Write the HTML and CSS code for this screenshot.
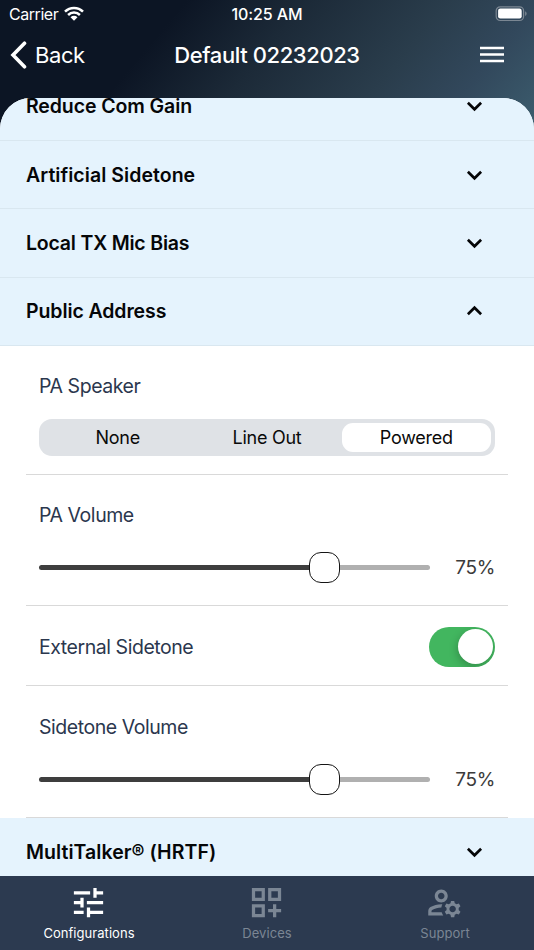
FILE: index.html
```html
<!DOCTYPE html>
<html lang="en">
<head>
<meta charset="utf-8">
<title>Default 02232023</title>
<link rel="stylesheet" href="styles.css">
</head>
<body>
<div class="app">
  <div class="status">
    <div class="carrier"><span class="carrier-name">Carrier</span>
      <svg class="wifi" viewBox="0 0 20 15"><path d="M1 5.6a12.8 12.8 0 0 1 18 0M4.1 9a8.4 8.4 0 0 1 11.8 0" fill="none" stroke="#fff" stroke-width="2.5"/><path d="M6.5 11.3a5 5 0 0 1 7 0L10 14.8z" fill="#fff"/></svg>
    </div>
    <div class="clock">10:25 AM</div>
    <svg class="battery" viewBox="0 0 32 16"><rect x="1.2" y=".8" width="27.4" height="13.7" rx="4" fill="none" stroke="#7b8793" stroke-width="1.2"/><rect x="3.1" y="2.6" width="23.6" height="9.9" rx="2.2" fill="#fff"/><path d="M30.1 5.2c2 .8 2 4 0 4.800z" fill="#7b8793"/></svg>
  </div>
  <header class="nav">
    <div class="back"><svg class="back-icon" viewBox="0 0 18 28"><path d="M15.500 2.200 4 14l11.500 11.800" fill="none" stroke="#fff" stroke-width="3.600" stroke-linecap="round" stroke-linejoin="miter"/></svg><span>Back</span></div>
    <h1 class="title">Default 02232023</h1>
    <svg class="menu" viewBox="0 0 24 18"><path d="M0 2h24M0 8.500h24M0 15h24"/></svg>
  </header>
  <main class="sheet">
    <div class="list">
      <div class="row"><span>Reduce Com Gain</span><svg class="chev" viewBox="0 0 18 12"><path d="m2 2.500 7 7 7-7"/></svg></div>
      <div class="row wide low"><span>Artificial Sidetone</span><svg class="chev" viewBox="0 0 18 12"><path d="m2 2.500 7 7 7-7"/></svg></div>
      <div class="row tight"><span>Local TX Mic Bias</span><svg class="chev" viewBox="0 0 18 12"><path d="m2 2.500 7 7 7-7"/></svg></div>
      <div class="row"><span>Public Address</span><svg class="chev" viewBox="0 0 18 12"><path d="m2 9.500 7-7 7 7"/></svg></div>
      <section class="item speaker">
        <div class="label">PA Speaker</div>
        <div class="segments"><span class="seg">None</span><span class="seg">Line Out</span><span class="seg on">Powered</span></div>
      </section>
      <section class="item volume">
        <div class="label">PA Volume</div>
        <div class="slide"><div class="track"><div class="fill"></div><div class="knob"></div><div class="rest"></div></div><span class="pct">75%</span></div>
      </section>
      <section class="item external">
        <div class="label">External Sidetone</div>
        <div class="switch"><div class="dot"></div></div>
      </section>
      <section class="item volume last">
        <div class="label">Sidetone Volume</div>
        <div class="slide"><div class="track"><div class="fill"></div><div class="knob"></div><div class="rest"></div></div><span class="pct">75%</span></div>
      </section>
      <div class="row wide low"><span>MultiTalker® (HRTF)</span><svg class="chev" viewBox="0 0 18 12"><path d="m2 2.500 7 7 7-7"/></svg></div>
    </div>
  </main>
  <nav class="tabs">
    <div class="tab active"><svg viewBox="0 0 24 24"><path d="M3 17v2h6v-2H3zM3 5v2h10V5H3zm10 16v-2h8v-2h-8v-2h-2v6h2zM7 9v2H3v2h4v2h2V9H7zm14 4v-2H11v2h10zm-6-4h2V7h4V5h-4V3h-2v6z"/></svg><span>Configurations</span></div>
    <div class="tab"><svg viewBox="0 0 24 24"><path d="M3 11h8V3H3v8zm2-6h4v4H5V5zM13 3v8h8V3h-8zm6 6h-4V5h4v4zM3 21h8v-8H3v8zm2-6h4v4H5v-4zM18 13h-2v3h-3v2h3v3h2v-3h3v-2h-3z"/></svg><span>Devices</span></div>
    <div class="tab"><svg viewBox="0 0 24 24"><path d="M4 18v-.65c0-.34.16-.66.41-.81C6.100 15.530 8.030 15 10 15c.03 0 .05 0 .08.01.1-.7.3-1.370.59-1.980C10.450 13.010 10.230 13 10 13c-2.420 0-4.680.67-6.610 1.820C2.510 15.340 2 16.320 2 17.350V20h9.260c-.42-.6-.75-1.280-.97-2H4zM10 12c2.210 0 4-1.790 4-4s-1.790-4-4-4-4 1.790-4 4 1.790 4 4 4zm0-6c1.100 0 2 .9 2 2s-.9 2-2 2-2-.9-2-2 .9-2 2-2zM20.750 16c0-.22-.03-.42-.06-.63l1.140-1.010-1-1.730-1.450.49c-.32-.27-.68-.48-1.080-.63L18 11h-2l-.3 1.490c-.4.15-.76.36-1.080.63l-1.450-.49-1 1.730 1.140 1.010c-.03.21-.06.41-.06.63s.03.42.06.63l-1.140 1.010 1 1.730 1.450-.49c.32.27.68.48 1.080.63L16 21h2l.3-1.490c.4-.15.76-.36 1.080-.63l1.450.49 1-1.730-1.140-1.010c.03-.21.06-.41.06-.63zM17 18c-1.100 0-2-.9-2-2s.9-2 2-2 2 .9 2 2-.9 2-2 2z"/></svg><span>Support</span></div>
  </nav>
</div>
</body>
</html>
```
FILE: styles.css
```css
* { box-sizing: border-box; }
body { margin: 0; font-family: Inter, "Liberation Sans", sans-serif; }
.app {
  width: 534px; height: 950px; overflow: hidden;
  display: flex; flex-direction: column;
  background: linear-gradient(130deg, #0c1524 0%, #0c1524 29%, #1c2a38 48%, #2a3d4c 70%, #32485c 84%, #3c5d6e 100%) 0 0 / 534px 132px no-repeat;
}
.status {
  height: 28px; display: grid; grid-template-columns: 1fr auto 1fr; align-items: center;
  padding: 0 7px 0 9px; color: #fff; font-size: 16px; line-height: 28px;
}
.carrier { display: flex; align-items: center; gap: 6px; }
.carrier-name { letter-spacing: -0.45px; }
.wifi { width: 20px; height: 15px; margin-top: -2px; }
.clock { font-weight: 500; letter-spacing: -0.1px; margin: 0 1px 0 -1px; }
.battery { width: 32px; height: 16px; justify-self: end; }
.nav {
  height: 70px; display: grid; grid-template-columns: 1fr auto 1fr; align-items: start;
  padding: 0 30px 0 9px; color: #fff;
}
.back { display: flex; align-items: center; height: 54px; gap: 8px; font-size: 22px; letter-spacing: -0.4px; }
.back-icon { width: 18px; height: 28px; }
.title { margin: 0 -10px 0 11px; font-size: 22px; line-height: 54px; font-weight: 550; letter-spacing: -0.4px; }
.menu { justify-self: end; width: 24px; height: 18px; margin-top: 18px; }
.menu path { stroke: #fff; stroke-width: 2.600; }
.sheet { flex: 1; min-height: 0; overflow: hidden; border-radius: 31px 31px 0 0; background: #fff; }
.list { margin-top: -25.600px; }
.row {
  height: 68.400px; display: flex; align-items: center; justify-content: space-between;
  padding: 0 51px 0 26px; background: #e5f3fd; border-bottom: 1px solid #d9e7f0;
  color: #050608; font-size: 19.500px; font-weight: 600; letter-spacing: -0.1px;
}
.row.low { padding-top: 1px; }
.row.wide { letter-spacing: 0.05px; }
.row.tight { letter-spacing: -0.2px; }
.chev { width: 17px; height: 12px; }
.chev path { fill: none; stroke: #050608; stroke-width: 2.800; }
.item { margin: 0 26px; padding: 0 13px; border-bottom: 1.400px solid #d9d9d9; }
.label { color: #2b374e; font-size: 19.500px; line-height: 24px; letter-spacing: -0.45px; }
.speaker { height: 129px; padding-top: 28px; }
.segments {
  margin-top: 21.500px; height: 37px; padding: 4px; display: grid; grid-template-columns: repeat(3, 1fr);
  border-radius: 13px; background: #dfe2e6;
}
.seg { border-radius: 11px; font-size: 18px; line-height: 29px; text-align: center; color: #0a0a0a; letter-spacing: -0.25px; }
.seg.on { background: #fff; }
.volume { height: 131.500px; padding-top: 28px; }
.slide { display: flex; align-items: center; justify-content: space-between; height: 32px; margin-top: 25px; }
.track { width: 391px; display: flex; align-items: center; }
.fill { width: 270px; height: 5px; border-radius: 3px 0 0 3px; background: #3e3e3e; }
.knob { width: 31px; height: 31px; border: 1.500px solid #151515; border-radius: 12px; background: #fff; }
.rest { flex: 1; height: 5px; border-radius: 0 3px 3px 0; background: #b0b0b0; }
.pct { font-size: 19px; color: #3b3b3b; letter-spacing: -0.3px; }
.external { height: 80px; padding-top: 2px; display: flex; align-items: center; justify-content: space-between; }
.switch { width: 66px; height: 40px; padding: 2px; border-radius: 20px; background: #42b65f; display: flex; justify-content: flex-end; align-items: center; overflow: hidden; }
.dot { width: 35px; height: 35px; border-radius: 50%; background: #fff; box-shadow: -1px 3px 9px rgba(0,0,0,.22); }
.volume.last { padding-top: 28.500px; }
.tabs { height: 74px; display: grid; grid-template-columns: repeat(3, 1fr); background: #2c3a50; }
.tab { display: flex; flex-direction: column; align-items: center; color: #7b8694; font-size: 13px; letter-spacing: .05px; }
.tab svg { width: 39px; height: 39px; margin: 6.500px 1px 0 0; fill: currentColor; }
.tab span { line-height: 18px; margin-top: 2.500px; }
.active { color: #fff; }
```
